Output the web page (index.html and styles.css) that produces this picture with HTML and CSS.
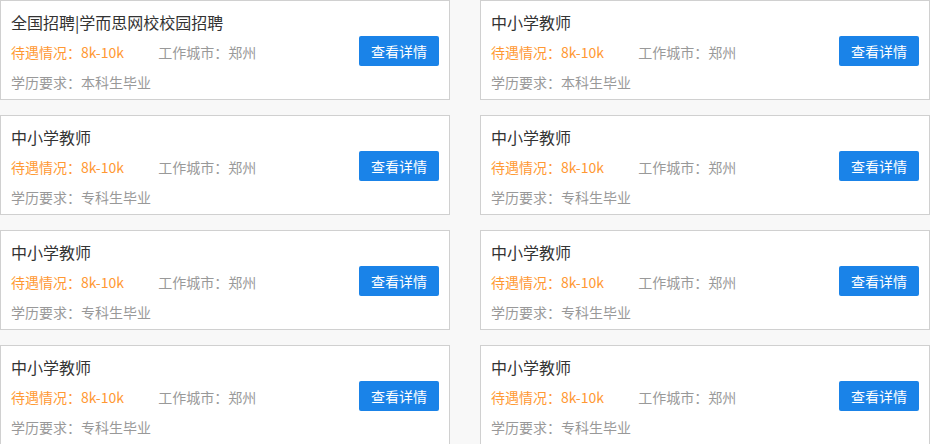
FILE: index.html
```html
<!DOCTYPE html>
<html>
<head>
  <meta charset="utf-8">
  <link rel="stylesheet" href="styles.css">
</head>
<body>
  <div class="job-list">
    <div class="job-card">
      <div class="job-info">
        <div class="job-title">全国招聘|学而思网校校园招聘</div>
        <div class="job-row">
          <span class="salary">待遇情况：8k-10k</span>
          <span class="city">工作城市：郑州</span>
        </div>
        <div class="job-row edu">学历要求：本科生毕业</div>
      </div>
      <button class="detail-btn">查看详情</button>
    </div>
    <div class="job-card">
      <div class="job-info">
        <div class="job-title">中小学教师</div>
        <div class="job-row">
          <span class="salary">待遇情况：8k-10k</span>
          <span class="city">工作城市：郑州</span>
        </div>
        <div class="job-row edu">学历要求：本科生毕业</div>
      </div>
      <button class="detail-btn">查看详情</button>
    </div>
    <div class="job-card">
      <div class="job-info">
        <div class="job-title">中小学教师</div>
        <div class="job-row">
          <span class="salary">待遇情况：8k-10k</span>
          <span class="city">工作城市：郑州</span>
        </div>
        <div class="job-row edu">学历要求：专科生毕业</div>
      </div>
      <button class="detail-btn">查看详情</button>
    </div>
    <div class="job-card">
      <div class="job-info">
        <div class="job-title">中小学教师</div>
        <div class="job-row">
          <span class="salary">待遇情况：8k-10k</span>
          <span class="city">工作城市：郑州</span>
        </div>
        <div class="job-row edu">学历要求：专科生毕业</div>
      </div>
      <button class="detail-btn">查看详情</button>
    </div>
    <div class="job-card">
      <div class="job-info">
        <div class="job-title">中小学教师</div>
        <div class="job-row">
          <span class="salary">待遇情况：8k-10k</span>
          <span class="city">工作城市：郑州</span>
        </div>
        <div class="job-row edu">学历要求：专科生毕业</div>
      </div>
      <button class="detail-btn">查看详情</button>
    </div>
    <div class="job-card">
      <div class="job-info">
        <div class="job-title">中小学教师</div>
        <div class="job-row">
          <span class="salary">待遇情况：8k-10k</span>
          <span class="city">工作城市：郑州</span>
        </div>
        <div class="job-row edu">学历要求：专科生毕业</div>
      </div>
      <button class="detail-btn">查看详情</button>
    </div>
    <div class="job-card">
      <div class="job-info">
        <div class="job-title">中小学教师</div>
        <div class="job-row">
          <span class="salary">待遇情况：8k-10k</span>
          <span class="city">工作城市：郑州</span>
        </div>
        <div class="job-row edu">学历要求：专科生毕业</div>
      </div>
      <button class="detail-btn">查看详情</button>
    </div>
    <div class="job-card">
      <div class="job-info">
        <div class="job-title">中小学教师</div>
        <div class="job-row">
          <span class="salary">待遇情况：8k-10k</span>
          <span class="city">工作城市：郑州</span>
        </div>
        <div class="job-row edu">学历要求：专科生毕业</div>
      </div>
      <button class="detail-btn">查看详情</button>
    </div>
  </div>
</body>
</html>
```

FILE: styles.css
```css
body {
  margin: 0;
  background: #f8f8f8;
  font-family: "Microsoft YaHei", "Noto Sans CJK SC", sans-serif;
  overflow: hidden;
}
.job-list {
  display: grid;
  grid-template-columns: 450px 450px;
  column-gap: 30px;
  row-gap: 15px;
}
.job-card {
  box-sizing: border-box;
  height: 100px;
  background: #fff;
  border: 1px solid #d0d0d0;
  padding: 6px 10px 0;
  display: flex;
  justify-content: space-between;
  align-items: flex-start;
}
.job-title {
  font-size: 16px;
  line-height: 30px;
  color: #333;
}
.job-row {
  font-size: 14px;
  line-height: 30px;
  color: #999;
}
.salary {
  display: inline-block;
  width: 144px;
  color: #ff9933;
}
.detail-btn {
  margin-top: 29px;
  width: 80px;
  height: 30px;
  padding: 0;
  border: none;
  border-radius: 2px;
  background: #1a83e8;
  color: #fff;
  font-family: inherit;
  font-size: 14px;
  cursor: pointer;
}
```
